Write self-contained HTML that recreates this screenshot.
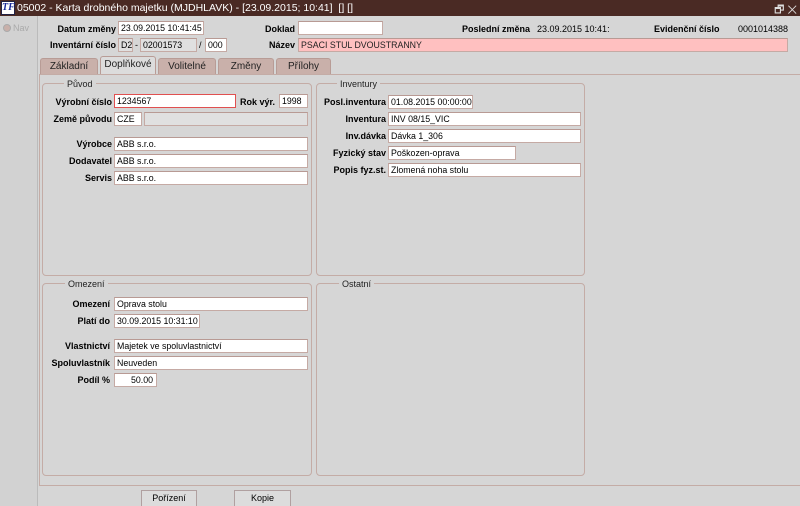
<!DOCTYPE html>
<html><head><meta charset="utf-8"><style>
*{box-sizing:border-box;margin:0;padding:0}
body{width:800px;height:506px;overflow:hidden;background:#d6d6d6;font-family:"Liberation Sans",Arial,sans-serif;font-size:9px;color:#000;position:relative}
.a{position:absolute}
.t{position:absolute;left:0;top:0;width:800px;height:16px;background:#4a2a24;color:#fff;font-size:10.5px;line-height:16px;padding-left:17px}
.lbl{position:absolute;font-weight:bold;text-align:right;white-space:nowrap;line-height:14px;font-size:9px}
.in{position:absolute;height:14px;background:#fff;border:1px solid #c5aaa4;border-top-color:#b89a94;line-height:13px;padding:0 0 0 2px;white-space:nowrap;overflow:hidden;font-size:8.8px}
.g{position:absolute;border:1px solid #c4aca6;border-radius:4px}
.lg{position:absolute;background:#d6d6d6;padding:0 3px;color:#222;line-height:12px}
.tab{position:absolute;top:58px;height:17px;background:#c9b0aa;border:1px solid #b89c96;border-bottom:none;border-radius:3px 3px 0 0;text-align:center;line-height:16px;font-size:10px;color:#222}
.btn{position:absolute;top:490px;height:16px;background:#dcdcdc;border:1px solid #b0a0a0;border-bottom:none;text-align:center;line-height:15px;font-size:9px}
</style></head><body>
<div class="t">05002 - Karta drobného majetku (MJDHLAVK) - [23.09.2015; 10:41] &nbsp;[] []</div>
<div class="a" style="left:1px;top:1px;width:14px;height:14px;background:#fff;border:1px solid #224;color:#1a2a9a;font:bold italic 10px 'Liberation Serif',serif;line-height:12px;text-align:center">TF</div>
<div class="a" style="right:3px;top:1px;color:#ddd;font-size:11px">🗗 ✕</div>
<div class="a" style="left:0;top:16px;width:38px;height:490px;background:#d2d2d2;border-right:1px solid #bbb"></div>
<div class="a" style="left:3px;top:24px;width:8px;height:8px;border-radius:50%;background:#c9b0aa;border:1px solid #aaa"></div>
<div class="a" style="left:13px;top:22px;color:#aaa;font-size:9px;line-height:12px">Nav</div>

<div class="lbl" style="right:684px;top:22px">Datum změny</div><div class="in" style="left:118px;top:21px;width:86px">23.09.2015 10:41:45</div>
<div class="lbl" style="right:505px;top:22px">Doklad</div><div class="in" style="left:298px;top:21px;width:85px"></div>
<div class="lbl" style="left:462px;top:22px">Poslední změna</div><div class="a" style="left:537px;top:22px;line-height:14px">23.09.2015 10:41:</div>
<div class="lbl" style="left:654px;top:22px">Evidenční číslo</div><div class="a" style="left:738px;top:22px;line-height:14px">0001014388</div>

<div class="lbl" style="right:684px;top:38px">Inventární číslo</div>
<div class="in" style="left:118px;top:38px;width:15px;background:#e0e0e0">D2</div><div class="a" style="left:135px;top:38px;line-height:14px">-</div>
<div class="in" style="left:140px;top:38px;width:57px;background:#e0e0e0">02001573</div><div class="a" style="left:199px;top:38px;line-height:14px">/</div>
<div class="in" style="left:205px;top:38px;width:22px">000</div>
<div class="lbl" style="right:505px;top:38px">Název</div><div class="in" style="left:298px;top:38px;width:490px;background:#ffc0c0;color:#222">PSACI STUL DVOUSTRANNY</div>

<div class="tab" style="left:40px;width:58px">Základní</div>
<div class="tab" style="left:100px;width:56px;top:56px;height:19px;background:#dcdcdc">Doplňkové</div>
<div class="tab" style="left:158px;width:58px">Volitelné</div>
<div class="tab" style="left:218px;width:56px">Změny</div>
<div class="tab" style="left:276px;width:55px">Přílohy</div>
<div class="a" style="left:39px;top:74px;width:761px;height:1px;background:#c4aca6"></div>
<div class="a" style="left:39px;top:74px;width:1px;height:412px;background:#c4aca6"></div>
<div class="a" style="left:39px;top:485px;width:761px;height:1px;background:#c4aca6"></div>

<div class="g" style="left:42px;top:83px;width:270px;height:193px"></div><div class="lg" style="left:64px;top:78px">Původ</div>
<div class="g" style="left:316px;top:83px;width:269px;height:193px"></div><div class="lg" style="left:337px;top:78px">Inventury</div>
<div class="g" style="left:42px;top:283px;width:270px;height:193px"></div><div class="lg" style="left:65px;top:278px">Omezení</div>
<div class="g" style="left:316px;top:283px;width:269px;height:193px"></div><div class="lg" style="left:339px;top:278px">Ostatní</div>

<div class="lbl" style="right:688px;top:95px">Výrobní číslo</div><div class="in" style="left:114px;top:94px;width:122px;border-color:#e05050">1234567</div>
<div class="lbl" style="left:240px;top:95px">Rok výr.</div><div class="in" style="left:279px;top:94px;width:29px">1998</div>
<div class="lbl" style="right:688px;top:112px">Země původu</div><div class="in" style="left:114px;top:112px;width:28px">CZE</div><div class="in" style="left:144px;top:112px;width:164px;background:#e0e0e0"></div>
<div class="lbl" style="right:688px;top:137px">Výrobce</div><div class="in" style="left:114px;top:137px;width:194px">ABB s.r.o.</div>
<div class="lbl" style="right:688px;top:154px">Dodavatel</div><div class="in" style="left:114px;top:154px;width:194px">ABB s.r.o.</div>
<div class="lbl" style="right:688px;top:171px">Servis</div><div class="in" style="left:114px;top:171px;width:194px">ABB s.r.o.</div>

<div class="lbl" style="right:414px;top:95px">Posl.inventura</div><div class="in" style="left:388px;top:95px;width:85px">01.08.2015 00:00:00</div>
<div class="lbl" style="right:414px;top:112px">Inventura</div><div class="in" style="left:388px;top:112px;width:193px">INV 08/15_VIC</div>
<div class="lbl" style="right:414px;top:129px">Inv.dávka</div><div class="in" style="left:388px;top:129px;width:193px">Dávka 1_306</div>
<div class="lbl" style="right:414px;top:146px">Fyzický stav</div><div class="in" style="left:388px;top:146px;width:128px">Poškozen-oprava</div>
<div class="lbl" style="right:414px;top:163px">Popis fyz.st.</div><div class="in" style="left:388px;top:163px;width:193px">Zlomená noha stolu</div>

<div class="lbl" style="right:690px;top:297px">Omezení</div><div class="in" style="left:114px;top:297px;width:194px">Oprava stolu</div>
<div class="lbl" style="right:690px;top:314px">Platí do</div><div class="in" style="left:114px;top:314px;width:86px">30.09.2015 10:31:10</div>
<div class="lbl" style="right:690px;top:339px">Vlastnictví</div><div class="in" style="left:114px;top:339px;width:194px">Majetek ve spoluvlastnictví</div>
<div class="lbl" style="right:690px;top:356px">Spoluvlastník</div><div class="in" style="left:114px;top:356px;width:194px">Neuveden</div>
<div class="lbl" style="right:690px;top:373px">Podíl %</div><div class="in" style="left:114px;top:373px;width:43px;text-align:right;padding-right:3px">50.00</div>

<div class="btn" style="left:141px;width:56px">Pořízení</div>
<div class="btn" style="left:234px;width:57px">Kopie</div>
</body></html>
